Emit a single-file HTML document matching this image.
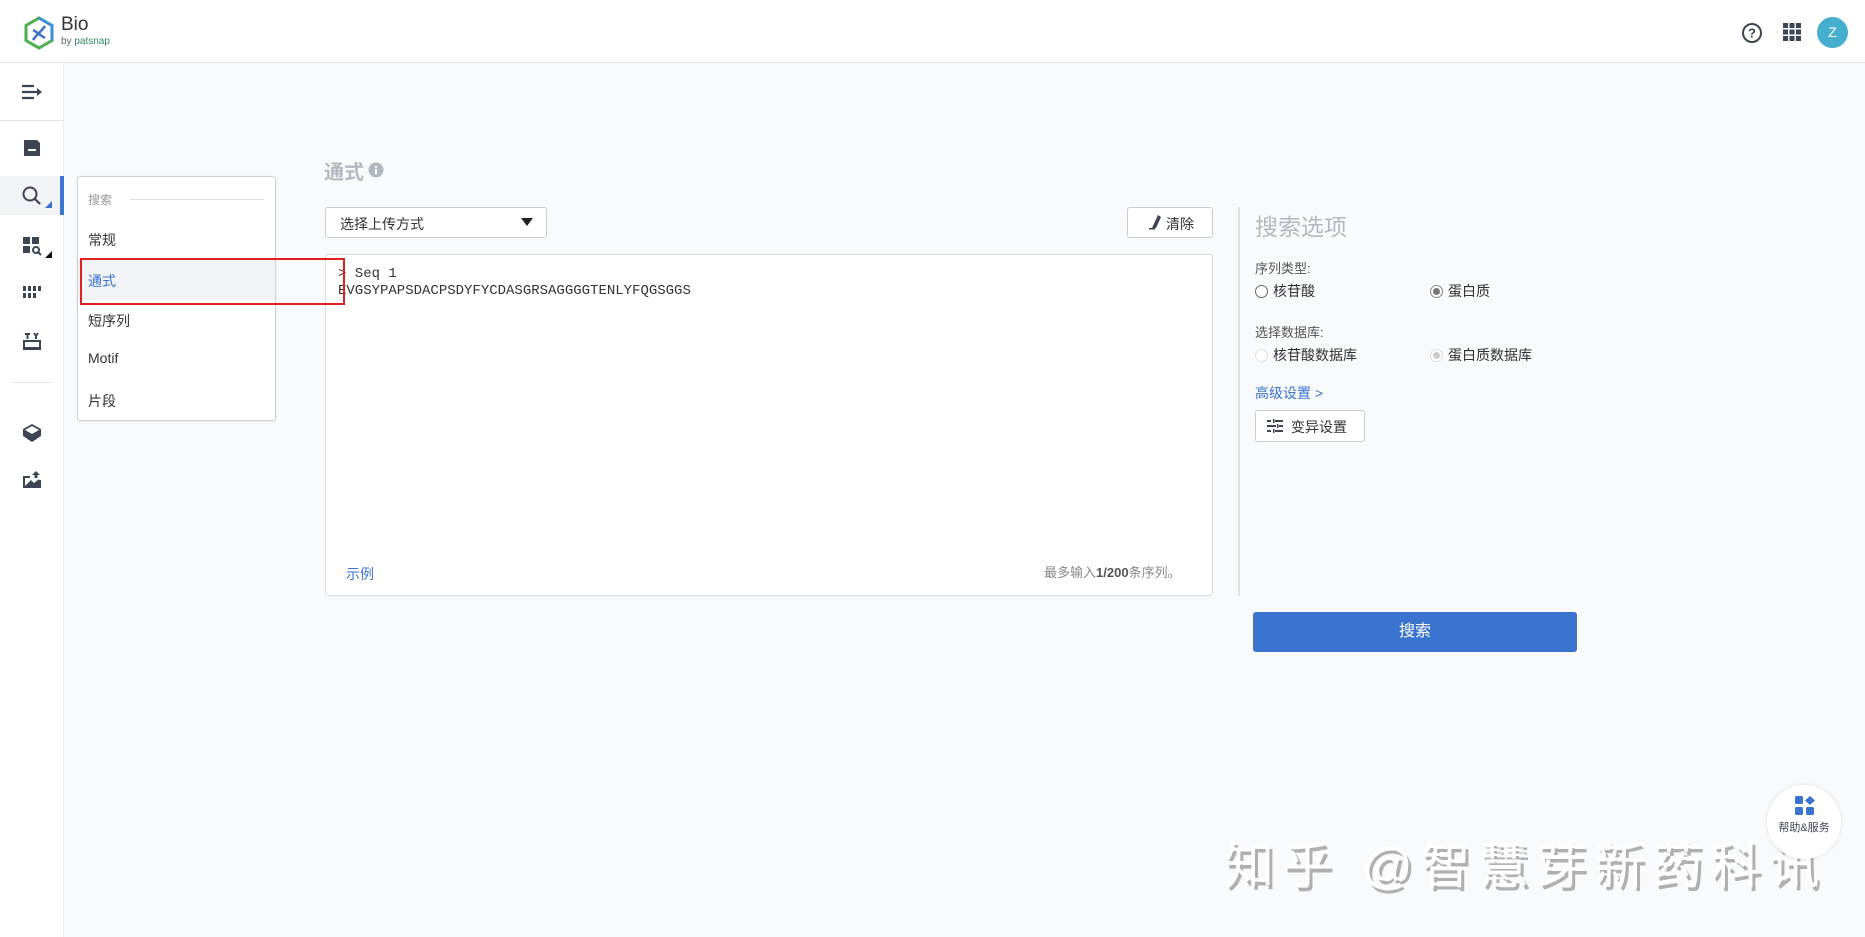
<!DOCTYPE html>
<html><head><meta charset="utf-8"><style>
*{box-sizing:border-box;margin:0;padding:0}
body{width:1865px;height:937px;overflow:hidden;background:#f9fafc;font-family:"Liberation Sans","Noto Sans CJK SC",sans-serif;color:#333;position:relative;font-size:14px}
.abs{position:absolute}
.hdr{left:0;top:0;width:1865px;height:63px;background:#fff;border-bottom:1px solid #e3e5ea}
.side{left:0;top:63px;width:64px;height:874px;background:#fff;border-right:1px solid #eceef2}
.ico{position:absolute;left:21px;width:22px;height:22px}
.menu{left:77px;top:176px;width:199px;height:245px;background:#fff;border:1px solid #cfd2d8;border-radius:3px;box-shadow:0 1px 3px rgba(0,0,0,.08)}
.mi{position:absolute;left:10px;font-size:14px;color:#333}
.radio{display:inline-block;width:13px;height:13px;border:1px solid #666;border-radius:50%;vertical-align:-2px;margin-right:5px;position:relative;background:#fff}
</style></head><body>
<div class="abs hdr"></div>
<svg class="abs" style="left:23px;top:16px" width="32" height="34" viewBox="0 0 32 34"><path d="M16 2 L29 9.5 V24.5 L16 32 L3 24.5 V9.5Z" fill="none" stroke="#4caf50" stroke-width="3"/><path d="M16 2 L29 9.5 V24.5" fill="none" stroke="#3d8fd8" stroke-width="3"/><path d="M10 24 C14 18 18 16 22 10 M10 14 C14 16 18 20 22 22" stroke="#3d74c8" stroke-width="2.5" fill="none"/></svg>
<div class="abs" style="left:61px;top:14px;font-size:19px;color:#333">Bio</div>
<div class="abs" style="left:61px;top:36px;font-size:10px;color:#666">by <span style="color:#2d8c5c">patsnap</span></div>
<svg class="abs" style="left:1741px;top:22px" width="22" height="22" viewBox="0 0 22 22"><circle cx="11" cy="11" r="9" fill="none" stroke="#3d4554" stroke-width="2"/><text x="11" y="15.5" text-anchor="middle" font-size="13" font-weight="bold" fill="#3d4554" font-family="Liberation Sans">?</text></svg>
<svg class="abs" style="left:1783px;top:23px" width="18" height="18"><g fill="#3d4554"><rect x="0" y="0" width="5" height="5"/><rect x="6.5" y="0" width="5" height="5"/><rect x="13" y="0" width="5" height="5"/><rect x="0" y="6.5" width="5" height="5"/><rect x="6.5" y="6.5" width="5" height="5"/><rect x="13" y="6.5" width="5" height="5"/><rect x="0" y="13" width="5" height="5"/><rect x="6.5" y="13" width="5" height="5"/><rect x="13" y="13" width="5" height="5"/></g></svg>
<div class="abs" style="left:1817px;top:17px;width:31px;height:31px;border-radius:50%;background:#46afd0;color:#fff;font-size:14px;text-align:center;line-height:31px">Z</div>

<div class="abs side">
 <div class="abs" style="left:0;top:57px;width:64px;height:1px;background:#e3e5ea"></div>
 <div class="abs" style="left:0;top:113px;width:63px;height:39px;background:#f2f3f6"></div>
 <div class="abs" style="left:60px;top:113px;width:4px;height:39px;background:#3a74d0"></div>
 <div class="abs" style="left:12px;top:319px;width:40px;height:1px;background:#e3e5ea"></div>
 <svg class="ico" style="top:18px" viewBox="0 0 22 22"><g stroke="#3d4554" stroke-width="2.2"><path d="M1 5H13M1 11H16M1 17H13"/></g><path d="M16 7L21 11L16 15Z" fill="#3d4554"/></svg>
 <svg class="ico" style="top:74px" viewBox="0 0 22 22"><path d="M3 3H16L19 6V19H3Z" fill="#3d4554"/><rect x="7" y="12" width="8" height="2" fill="#fff"/></svg>
 <svg class="ico" style="top:122px" viewBox="0 0 22 22"><circle cx="9" cy="9" r="6.5" fill="none" stroke="#3d4554" stroke-width="2"/><path d="M14 14L19 19" stroke="#3d4554" stroke-width="2.2"/></svg>
 <svg class="abs" style="left:45px;top:138px" width="7" height="7"><path d="M7 0V7H0Z" fill="#3a74d0"/></svg>
 <svg class="ico" style="top:172px" viewBox="0 0 22 22"><g fill="#3d4554"><rect x="2" y="2" width="7" height="7"/><rect x="11" y="2" width="7" height="7"/><rect x="2" y="11" width="7" height="7"/></g><circle cx="15" cy="15" r="3" fill="none" stroke="#3d4554" stroke-width="2"/><path d="M17 17L20 20" stroke="#3d4554" stroke-width="2"/></svg>
 <svg class="abs" style="left:45px;top:188px" width="7" height="7"><path d="M7 0V7H0Z" fill="#111"/></svg>
 <svg class="ico" style="top:218px" viewBox="0 0 22 22"><g fill="#3d4554"><rect x="2" y="5" width="3" height="5"/><rect x="7" y="5" width="3" height="5"/><rect x="12" y="5" width="3" height="5"/><rect x="17" y="5" width="3" height="5"/><rect x="2" y="12" width="3" height="5"/><rect x="7" y="12" width="3" height="5"/><rect x="12" y="12" width="3" height="5"/></g></svg>
 <svg class="ico" style="top:267px" viewBox="0 0 22 22"><g fill="#3d4554"><rect x="2" y="10" width="18" height="2"/><rect x="2" y="17" width="18" height="3"/><rect x="2" y="10" width="2" height="10"/><rect x="18" y="10" width="2" height="10"/><rect x="4" y="3" width="5" height="2"/><rect x="5.5" y="3" width="2" height="6"/><path d="M13 3L15 6L17 3" stroke="#3d4554" stroke-width="1.8" fill="none"/><rect x="14" y="5" width="2" height="4"/></g></svg>
 <svg class="ico" style="top:359px" viewBox="0 0 22 22"><path d="M11 2L20 7V14L11 20L2 14V7Z" fill="#3d4554"/><path d="M4 8L11 12L18 8L11 4Z" fill="#fff"/></svg>
 <svg class="ico" style="top:406px" viewBox="0 0 22 22"><path d="M2 7H9V9H4V17H18V11H20V19H2Z" fill="#3d4554"/><path d="M4 17L10 11L13 14L18 10V17Z" fill="#3d4554"/><path d="M15 2L19 6H16.5V9H13.5V6H11Z" fill="#3d4554"/></svg>
</div>

<div class="abs" style="left:324px;top:156px;font-size:20px;font-weight:bold;color:#b4b8c0">通式</div>
<svg class="abs" style="left:368px;top:162px" width="16" height="16"><circle cx="8" cy="8" r="7.5" fill="#b4b8c0"/><rect x="7" y="7" width="2" height="5" fill="#fff"/><rect x="7" y="4" width="2" height="2" fill="#fff"/></svg>

<div class="abs" style="left:325px;top:207px;width:222px;height:31px;background:#fff;border:1px solid #c9ccd2;border-radius:3px"></div>
<div class="abs" style="left:340px;top:214px;font-size:14px;color:#333">选择上传方式</div>
<svg class="abs" style="left:521px;top:217px" width="12" height="10"><path d="M0 1H12L6 9Z" fill="#222"/></svg>
<div class="abs" style="left:1127px;top:207px;width:86px;height:31px;background:#fff;border:1px solid #c9ccd2;border-radius:3px"></div>
<svg class="abs" style="left:1148px;top:213px" width="14" height="18"><path d="M4 15L10 2L13 4L8 15Z" fill="#3d4554"/><rect x="1" y="15" width="6" height="1.5" fill="#3d4554"/></svg>
<div class="abs" style="left:1166px;top:214px;font-size:14px;color:#333">清除</div>

<div class="abs" style="left:325px;top:254px;width:888px;height:342px;background:#fff;border:1px solid #d7dae0;border-radius:3px"></div>
<div class="abs" style="left:338px;top:266px;font-family:'Liberation Mono',monospace;font-size:14px;line-height:17px;color:#333;white-space:pre">&gt; Seq 1
EVGSYPAPSDACPSDYFYCDASGRSAGGGGTENLYFQGSGGS</div>
<div class="abs" style="left:346px;top:564px;font-size:14px;color:#3a74d0">示例</div>
<div class="abs" style="left:1044px;top:562px;font-size:13px;color:#888">最多输入<b style="color:#555">1/200</b>条序列。</div>

<div class="abs" style="left:1238px;top:207px;width:2px;height:389px;background:#dfe2e6"></div>
<div class="abs" style="left:1255px;top:208px;font-size:23px;color:#b4b8c0">搜索选项</div>
<div class="abs" style="left:1255px;top:258px;font-size:13px;color:#555">序列类型:</div>
<div class="abs" style="left:1255px;top:281px;font-size:14px;color:#333"><span class="radio"></span>核苷酸</div>
<div class="abs" style="left:1430px;top:281px;font-size:14px;color:#333"><span class="radio" style="border-color:#888"><span style="position:absolute;left:2px;top:2px;width:7px;height:7px;border-radius:50%;background:#777"></span></span>蛋白质</div>
<div class="abs" style="left:1255px;top:322px;font-size:13px;color:#555">选择数据库:</div>
<div class="abs" style="left:1255px;top:345px;font-size:14px;color:#333"><span class="radio" style="border-color:#ddd"></span>核苷酸数据库</div>
<div class="abs" style="left:1430px;top:345px;font-size:14px;color:#333"><span class="radio" style="border-color:#ddd"><span style="position:absolute;left:2px;top:2px;width:7px;height:7px;border-radius:50%;background:#ccc"></span></span>蛋白质数据库</div>
<div class="abs" style="left:1255px;top:383px;font-size:14px;color:#3a74d0">高级设置 &gt;</div>
<div class="abs" style="left:1255px;top:410px;width:110px;height:32px;background:#fff;border:1px solid #c9ccd2;border-radius:3px"></div>
<svg class="abs" style="left:1267px;top:419px" width="16" height="14"><g fill="#3d4554"><rect x="0" y="1" width="4" height="2"/><rect x="8" y="1" width="8" height="2"/><rect x="6" y="0" width="1.5" height="4"/><rect x="0" y="6" width="9" height="2"/><rect x="12" y="6" width="4" height="2"/><rect x="10" y="5" width="1.5" height="4"/><rect x="0" y="11" width="4" height="2"/><rect x="8" y="11" width="8" height="2"/><rect x="6" y="10" width="1.5" height="4"/></g></svg>
<div class="abs" style="left:1291px;top:417px;font-size:14px;color:#333">变异设置</div>
<div class="abs" style="left:1253px;top:612px;width:324px;height:40px;background:#3a74d0;border-radius:3px;color:#fff;font-size:16px;text-align:center;line-height:40px">搜索</div>

<div class="abs menu">
 <div class="mi" style="top:14px;font-size:12px;color:#999">搜索</div>
 <div class="abs" style="left:52px;top:22px;width:134px;height:1px;background:#dcdfe4"></div>
 <div class="mi" style="top:53px">常规</div>
 <div class="abs" style="left:0;top:82px;width:197px;height:41px;background:#f2f3f6"></div>
 <div class="mi" style="top:94px;color:#3a74d0">通式</div>
 <div class="mi" style="top:134px">短序列</div>
 <div class="mi" style="top:173px">Motif</div>
 <div class="mi" style="top:214px">片段</div>
</div>
<div class="abs" style="left:80px;top:258px;width:265px;height:47px;border:2px solid #e02020"></div>

<div class="abs" style="left:1224px;top:826px;font-size:50px;color:#fff;letter-spacing:8px;white-space:nowrap;text-shadow:3px 4px 0 #b0b0b0">知乎 @智慧芽新药科讯</div>

<div class="abs" style="left:1767px;top:785px;width:74px;height:74px;border-radius:50%;background:#fff;box-shadow:0 0 4px rgba(0,0,0,.12)"></div>
<svg class="abs" style="left:1795px;top:796px" width="20" height="20"><g fill="#3a74d0"><rect x="0" y="0" width="8" height="8" rx="1.5"/><path d="M15 0L20 4.5L15 9L10 4.5Z"/><rect x="0" y="11" width="8" height="8" rx="1.5"/><rect x="11" y="11" width="8" height="8" rx="1.5"/></g></svg>
<div class="abs" style="left:1773px;top:819px;width:62px;text-align:center;font-size:11px;color:#3d4554">帮助&amp;服务</div>
</body></html>
